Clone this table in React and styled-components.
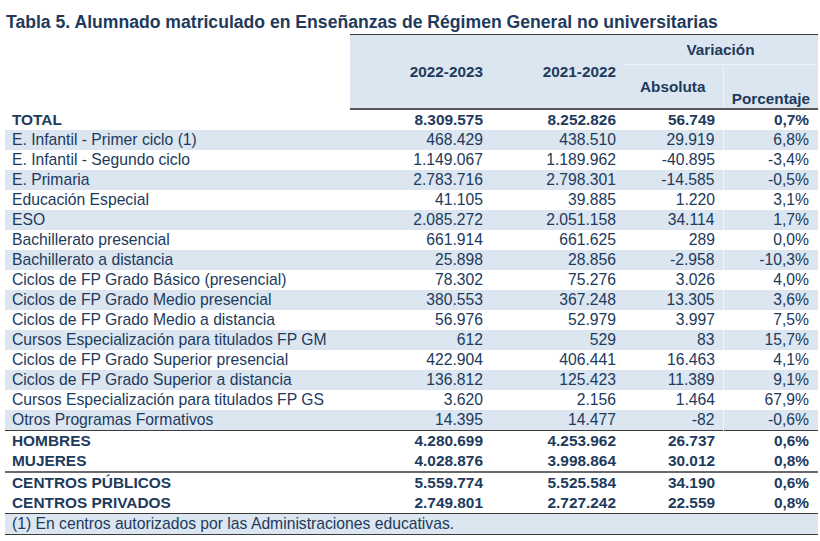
import React from "react";
import styled, { createGlobalStyle } from "styled-components";

const GlobalStyle = createGlobalStyle`
  body {
    margin: 0;
    background: #ffffff;
    font-family: "Liberation Sans", Arial, sans-serif;
    color: #213a5c;
  }
`;

const Page = styled.div`
  width: 820px;
  padding: 12px 2px 0 5px;
  box-sizing: border-box;
`;

const Title = styled.h1`
  margin: 0 0 0 1px;
  height: 22px;
  line-height: 20px;
  font-size: 17.6px;
  font-weight: bold;
  color: #213a5c;
  white-space: nowrap;
`;

const Table = styled.table`
  width: 813px;
  border-collapse: collapse;
  table-layout: fixed;
  font-size: 15.7px;
  color: #213a5c;
`;

const HeadCell = styled.th`
  background: ${(props) => (props.blank ? "transparent" : "#dce6f1")};
  border-top: ${(props) => (props.blank ? "none" : "1px solid #3c3c3c")};
  font-weight: bold;
  font-size: 15.3px;
  padding: 0 ${(props) => props.pr || "7px"} 0 0;
  text-align: ${(props) => props.align || "right"};
  vertical-align: ${(props) => props.valign || "middle"};
  height: ${(props) => props.h || "auto"};
  border-bottom: ${(props) => (props.bottom ? "2px solid #555" : "none")};
  border-left: ${(props) => (props.split ? "1px solid #eef2f8" : "none")};
`;

const SubHead = styled(HeadCell)`
  border-top: 1px solid #eef2f8;
`;

const Row = styled.tr`
  height: 20px;
  background: ${(props) => (props.band ? "#dce6f1" : "transparent")};
  font-weight: ${(props) => (props.bold ? "bold" : "normal")};
  font-size: ${(props) => (props.bold ? "15.4px" : "15.7px")};
  border-bottom: ${(props) => props.line || "none"};
`;

const Label = styled.td`
  padding: 0 0 0 7px;
  line-height: 20px;
  white-space: nowrap;
`;

const Num = styled.td`
  text-align: right;
  padding: 0 ${(props) => props.pr || "7px"} 0 0;
  line-height: 20px;
  white-space: nowrap;
  border-left: ${(props) => (props.split ? "1px solid rgba(255,255,255,0.6)" : "none")};
`;

const Note = styled.td`
  background: #dce6f1;
  padding: 0 0 0 7px;
  line-height: 20px;
  height: 20px;
  border-bottom: 1px solid #3c3c3c;
  white-space: nowrap;
`;

const rows = [
  ["TOTAL", "8.309.575", "8.252.826", "56.749", "0,7%", { bold: true }],
  ["E. Infantil - Primer ciclo (1)", "468.429", "438.510", "29.919", "6,8%", { band: true }],
  ["E. Infantil - Segundo ciclo", "1.149.067", "1.189.962", "-40.895", "-3,4%", {}],
  ["E. Primaria", "2.783.716", "2.798.301", "-14.585", "-0,5%", { band: true }],
  ["Educación Especial", "41.105", "39.885", "1.220", "3,1%", {}],
  ["ESO", "2.085.272", "2.051.158", "34.114", "1,7%", { band: true }],
  ["Bachillerato presencial", "661.914", "661.625", "289", "0,0%", {}],
  ["Bachillerato a distancia", "25.898", "28.856", "-2.958", "-10,3%", { band: true }],
  ["Ciclos de FP Grado Básico (presencial)", "78.302", "75.276", "3.026", "4,0%", {}],
  ["Ciclos de FP Grado Medio presencial", "380.553", "367.248", "13.305", "3,6%", { band: true }],
  ["Ciclos de FP Grado Medio a distancia", "56.976", "52.979", "3.997", "7,5%", {}],
  ["Cursos Especialización para titulados FP GM", "612", "529", "83", "15,7%", { band: true }],
  ["Ciclos de FP Grado Superior presencial", "422.904", "406.441", "16.463", "4,1%", {}],
  ["Ciclos de FP Grado Superior a distancia", "136.812", "125.423", "11.389", "9,1%", { band: true }],
  ["Cursos Especialización para titulados FP GS", "3.620", "2.156", "1.464", "67,9%", {}],
  ["Otros Programas Formativos", "14.395", "14.477", "-82", "-0,6%", { band: true, line: "1px solid #3c3c3c" }],
  ["HOMBRES", "4.280.699", "4.253.962", "26.737", "0,6%", { bold: true }],
  ["MUJERES", "4.028.876", "3.998.864", "30.012", "0,8%", { bold: true, line: "2px solid #6a6a6a" }],
  ["CENTROS PÚBLICOS", "5.559.774", "5.525.584", "34.190", "0,6%", { bold: true }],
  ["CENTROS PRIVADOS", "2.749.801", "2.727.242", "22.559", "0,8%", { bold: true, line: "1px solid #3c3c3c" }],
];

export default function App() {
  return (
    <Page>
      <GlobalStyle />
      <Title>Tabla 5. Alumnado matriculado en Enseñanzas de Régimen General no universitarias</Title>
      <Table>
        <colgroup>
          <col style={{ width: 345 }} />
          <col style={{ width: 140 }} />
          <col style={{ width: 133 }} />
          <col style={{ width: 100 }} />
          <col style={{ width: 95 }} />
        </colgroup>
        <thead>
          <tr>
            <HeadCell blank rowSpan={2} />
            <HeadCell rowSpan={2} bottom>2022-2023</HeadCell>
            <HeadCell rowSpan={2} bottom>2021-2022</HeadCell>
            <HeadCell colSpan={2} align="center" pr="0" h="29px">Variación</HeadCell>
          </tr>
          <tr>
            <SubHead bottom align="center" pr="0" h="43px">Absoluta</SubHead>
            <SubHead bottom split valign="bottom" pr="8px">Porcentaje</SubHead>
          </tr>
        </thead>
        <tbody>
          {rows.map(([label, a, b, c, d, opts]) => (
            <Row key={label} band={opts.band} bold={opts.bold} line={opts.line}>
              <Label>{label}</Label>
              <Num>{a}</Num>
              <Num>{b}</Num>
              <Num pr="8px">{c}</Num>
              <Num pr="9px" split={opts.band}>{d}</Num>
            </Row>
          ))}
          <tr>
            <Note colSpan={5}>(1) En centros autorizados por las Administraciones educativas.</Note>
          </tr>
        </tbody>
      </Table>
    </Page>
  );
}
